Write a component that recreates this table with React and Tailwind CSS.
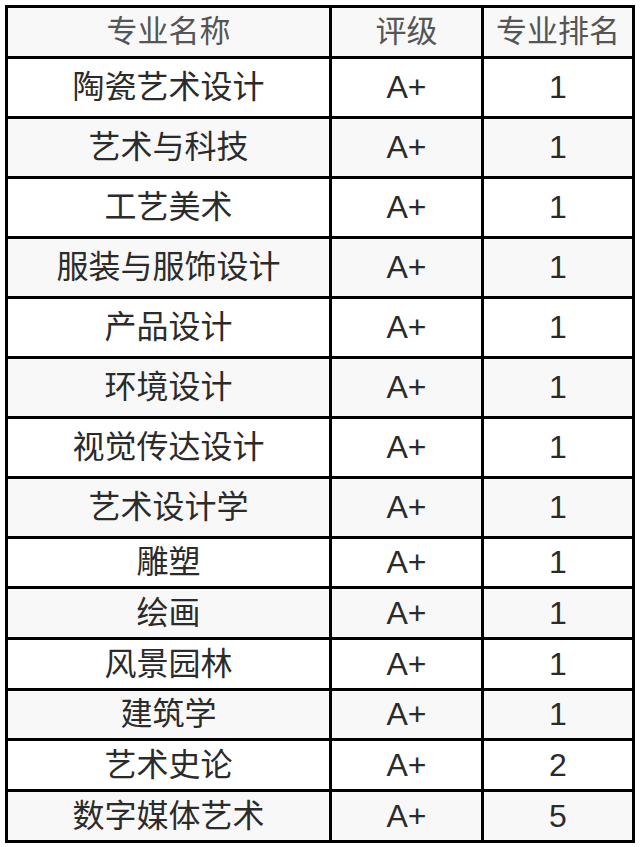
const rows = [
  ['陶瓷艺术设计', 'A+', '1'],
  ['艺术与科技', 'A+', '1'],
  ['工艺美术', 'A+', '1'],
  ['服装与服饰设计', 'A+', '1'],
  ['产品设计', 'A+', '1'],
  ['环境设计', 'A+', '1'],
  ['视觉传达设计', 'A+', '1'],
  ['艺术设计学', 'A+', '1'],
  ['雕塑', 'A+', '1'],
  ['绘画', 'A+', '1'],
  ['风景园林', 'A+', '1'],
  ['建筑学', 'A+', '1'],
  ['艺术史论', 'A+', '2'],
  ['数字媒体艺术', 'A+', '5'],
]

const font = { fontFamily: '"Liberation Sans", "Noto Sans CJK SC", sans-serif' }

const App = () => {
  return (
    <div className="min-h-screen bg-white p-[5px]" style={font}>
      <div className="grid w-[630px] grid-cols-[321px_149px_148px] gap-[3px] border-[3px] border-black bg-black text-[32px] leading-none">
        {['专业名称', '评级', '专业排名'].map(h => (
          <div key={h} className="flex h-[47.5px] items-center justify-center bg-[#f8f8f8] text-[31px] text-[#555555]">
            {h}
          </div>
        ))}
        {rows.map((r, i) => (
          r.map((cell, j) => (
            <div
              key={i + '-' + j}
              className={
                'flex items-center justify-center text-[#2b2b2b] ' +
                (i < 8 ? 'h-[57px] ' : 'h-[47.7px] ') +
                (i % 2 === 0 ? 'bg-white' : 'bg-[#f8f8f8]')
              }
            >
              {cell}
            </div>
          ))
        ))}
      </div>
    </div>
  )
}

export default App
